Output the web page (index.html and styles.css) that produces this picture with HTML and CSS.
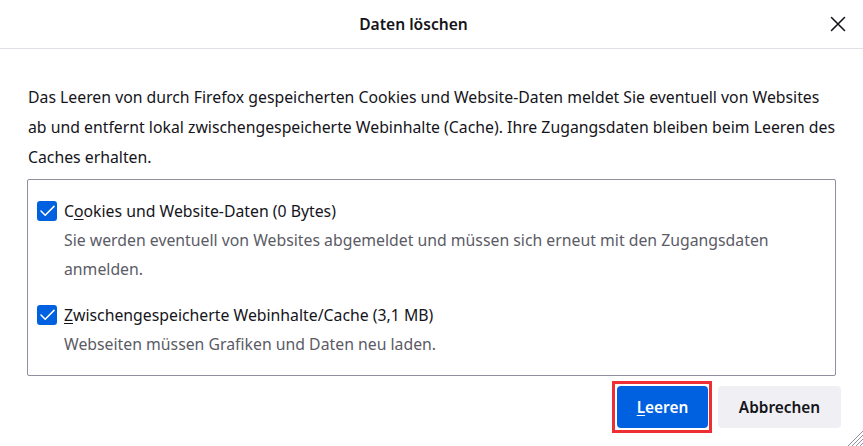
FILE: index.html
```html
<!DOCTYPE html>
<html lang="de">
<head>
<meta charset="utf-8">
<title>Daten löschen</title>
<link rel="stylesheet" href="styles.css">
</head>
<body>
<div class="dialog">
  <header class="dialog-header">
    <h1 class="dialog-title">Daten löschen</h1>
    <button class="close-btn" aria-label="Schließen">
      <svg width="16" height="16" viewBox="0 0 16 16"><path d="M1.5 1.5 L14.5 14.5 M14.5 1.5 L1.5 14.5" stroke="#15141a" stroke-width="1.6" stroke-linecap="round" fill="none"/></svg>
    </button>
  </header>
  <main class="dialog-body">
    <p class="intro">Das Leeren von durch Firefox gespeicherten Cookies und Website-Daten meldet Sie eventuell von Websites ab und entfernt lokal zwischengespeicherte Webinhalte (Cache). Ihre Zugangsdaten bleiben beim Leeren des Caches erhalten.</p>
    <div class="options">
      <div class="option">
        <span class="check"><svg width="15" height="12" viewBox="0 0 15 12"><path d="M1 6 L5.2 10.2 L14 1.4" stroke="#fff" stroke-width="1.5" fill="none" stroke-linecap="round" stroke-linejoin="round"/></svg></span>
        <div class="option-text">
          <div class="option-label">C<u>o</u>okies und Website-Daten (0 Bytes)</div>
          <div class="option-desc">Sie werden eventuell von Websites abgemeldet und müssen sich erneut mit den Zugangsdaten anmelden.</div>
        </div>
      </div>
      <div class="option">
        <span class="check"><svg width="15" height="12" viewBox="0 0 15 12"><path d="M1 6 L5.2 10.2 L14 1.4" stroke="#fff" stroke-width="1.5" fill="none" stroke-linecap="round" stroke-linejoin="round"/></svg></span>
        <div class="option-text">
          <div class="option-label"><u>Z</u>wischengespeicherte Webinhalte/Cache (3,1 MB)</div>
          <div class="option-desc">Webseiten müssen Grafiken und Daten neu laden.</div>
        </div>
      </div>
    </div>
  </main>
  <footer class="dialog-footer">
    <button class="btn btn-primary highlighted"><u>L</u>eeren</button>
    <button class="btn btn-secondary">Abbrechen</button>
  </footer>
  <svg class="grip" width="18" height="18" viewBox="0 0 18 18"><path d="M18 3 L3 18 M18 7 L7 18 M18 11 L11 18 M18 15 L15 18" stroke="#8f8f9d" stroke-width="1" fill="none"/></svg>
</div>
</body>
</html>
```

FILE: styles.css
```css
* { box-sizing: border-box; }
html, body {
  margin: 0;
  padding: 0;
  background: #fff;
}
body {
  font-family: "Noto Sans", "Open Sans", sans-serif;
  color: #15141a;
  width: 863px;
  height: 446px;
  overflow: hidden;
}
.dialog {
  position: relative;
  height: 446px;
}
.dialog-header {
  height: 49px;
  border-bottom: 1px solid #e0e0e6;
  display: flex;
  align-items: center;
  justify-content: center;
  padding-right: 36px;
  position: relative;
}
.dialog-title {
  margin: 0;
  font-size: 15.6px;
  font-weight: 600;
}
.close-btn {
  position: absolute;
  right: 17px;
  top: 16px;
  width: 16px;
  height: 16px;
  padding: 0;
  border: none;
  background: none;
  display: flex;
}
.dialog-body {
  padding: 33px 28px 0 28px;
}
.intro {
  margin: 0 0 7px 0;
  font-size: 15.8px;
  line-height: 30px;
}
.options {
  border: 1px solid #8f8f9d;
  border-radius: 2px;
  width: 809px;
  margin-left: -1px;
  padding: 16px 9px 16px 9px;
  display: flex;
  flex-direction: column;
  gap: 16px;
}
.option {
  display: flex;
  gap: 7px;
  align-items: flex-start;
}
.check {
  width: 20px;
  height: 20px;
  margin-top: 5px;
  background: #0061e0;
  border-radius: 3px;
  display: flex;
  align-items: center;
  justify-content: center;
  flex: none;
}
.option-label {
  font-size: 15.8px;
  line-height: 30px;
}
.option-desc {
  font-size: 15.8px;
  line-height: 29px;
  color: #5b5b66;
}
u { text-underline-offset: 2px; }
.dialog-footer {
  display: flex;
  justify-content: flex-end;
  gap: 10px;
  padding: 10px 22px 0 0;
}
.btn {
  height: 42px;
  border: none;
  border-radius: 4px;
  font-family: inherit;
  font-size: 15.4px;
  font-weight: 600;
  padding: 0 10px;
}
.btn-primary {
  background: #0061e0;
  color: #fff;
  width: 91px;
}
.btn-secondary {
  background: #f0f0f4;
  color: #15141a;
  width: 123px;
}
.highlighted {
  position: relative;
}
.highlighted::after {
  content: "";
  position: absolute;
  inset: -5px -4px -5px -5px;
  border: 3px solid #ee2e35;
}
.grip {
  position: absolute;
  right: 0;
  bottom: 0;
}
```
